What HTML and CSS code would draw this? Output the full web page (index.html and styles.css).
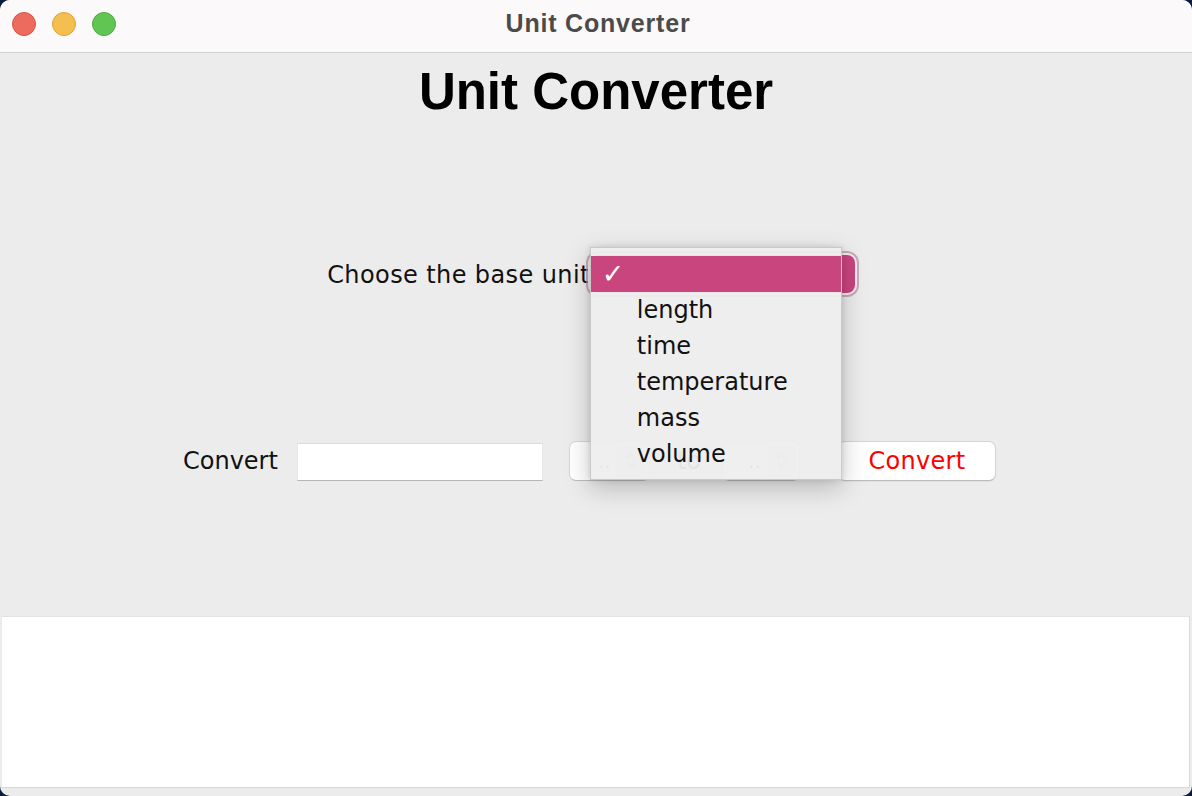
FILE: index.html
```html
<!DOCTYPE html>
<html>
<head>
<meta charset="utf-8">
<link rel="stylesheet" href="styles.css">
</head>
<body>
<div class="window">
  <div class="titlebar">
    <div class="lights">
      <span class="light red"></span>
      <span class="light yellow"></span>
      <span class="light green"></span>
    </div>
    <div class="wintitle">Unit Converter</div>
    <div></div>
  </div>
  <div class="content">
    <h1 class="heading">Unit Converter</h1>
    <div class="base-row">
      <span class="label base-label">Choose the base unit</span>
      <div class="base-combo">
        <div class="popup">
          <div class="item selected"><span class="check">✓</span></div>
          <div class="item">length</div>
          <div class="item">time</div>
          <div class="item">temperature</div>
          <div class="item">mass</div>
          <div class="item">volume</div>
        </div>
      </div>
    </div>
    <div class="convert-row">
      <span class="label">Convert</span>
      <div class="field"></div>
      <div class="combo combo-a"><span class="dots">..</span><span class="arrow"><svg width="14" height="18" viewBox="0 0 14 18"><path d="M3 7 L7 3 L11 7 M3 11 L7 15 L11 11" fill="none" stroke="#e9a9b3" stroke-width="2"/></svg></span></div>
      <span class="label to">to</span>
      <div class="combo combo-b"><span class="dots">..</span><span class="arrow"><svg width="14" height="18" viewBox="0 0 14 18"><path d="M3 7 L7 3 L11 7 M3 11 L7 15 L11 11" fill="none" stroke="#e9a9b3" stroke-width="2"/></svg></span></div>
      <button class="btn">Convert</button>
    </div>
  </div>
  <div class="output"></div>
</div>
</body>
</html>
```

FILE: styles.css
```css
html, body {
  margin: 0;
  padding: 0;
}
body {
  background: #0d1c3c;
  width: 1192px;
  height: 796px;
  overflow: hidden;
}
.window {
  width: 1192px;
  height: 796px;
  border-radius: 10px;
  overflow: hidden;
  background: #ececec;
  display: flex;
  flex-direction: column;
}
.titlebar {
  height: 52px;
  flex: none;
  background: #fbf9fa;
  border-bottom: 1px solid #d2d0d1;
  display: grid;
  grid-template-columns: 1fr auto 1fr;
  align-items: center;
}
.lights {
  display: flex;
  gap: 16px;
  padding-left: 12px;
  margin-top: -5px;
}
.light {
  width: 24px;
  height: 24px;
  border-radius: 50%;
  box-sizing: border-box;
}
.red { background: #ed6a5e; border: 1px solid #d65448; }
.yellow { background: #f5bf4f; border: 1px solid #d9a53c; }
.green { background: #61c554; border: 1px solid #50a845; }
.wintitle {
  font-family: "Liberation Sans", Arial, sans-serif;
  font-weight: bold;
  font-size: 25px;
  letter-spacing: 0.8px;
  color: #4b4b4b;
  margin-top: -6px;
  padding-left: 4px;
}
.content {
  flex: 1;
  display: flex;
  flex-direction: column;
  align-items: center;
}
.heading {
  margin: 9px 0 0 0;
  font-family: "Liberation Sans", Arial, sans-serif;
  font-weight: bold;
  font-size: 51px;
  line-height: 60px;
  color: #000;
}
.label {
  font-family: "DejaVu Sans", sans-serif;
  font-size: 24px;
  color: #111;
}
.base-row {
  margin-top: 132px;
  display: flex;
  align-items: center;
  height: 40px;
  margin-right: 10px;
}
.base-label {
  letter-spacing: 0.4px;
  margin-top: 2px;
}
.base-combo {
  position: relative;
  width: 265px;
  height: 38px;
  border-radius: 8px;
  background: #c9457e;
  box-shadow: 0 0 0 2px #f3eef1, 0 0 0 4px rgba(190, 140, 165, 0.7);
}
.popup {
  position: absolute;
  left: 0;
  top: -8px;
  width: 252px;
  height: 233px;
  box-sizing: border-box;
  padding-top: 8px;
  background: rgba(238, 238, 238, 0.93);
  border: 1px solid #c9c9c9;
  box-shadow: 0 8px 24px rgba(0, 0, 0, 0.22), 0 0 6px rgba(0, 0, 0, 0.12);
  z-index: 5;
}
.item {
  height: 36px;
  line-height: 36px;
  padding-left: 46px;
  font-family: "DejaVu Sans", sans-serif;
  font-size: 24px;
  color: #111;
  position: relative;
}
.item.selected {
  background: #c9457e;
}
.check {
  position: absolute;
  left: 11px;
  top: 0;
  color: #fff;
  font-size: 27px;
  font-weight: bold;
}
.convert-row {
  margin-top: 146px;
  display: flex;
  align-items: center;
  height: 41px;
  margin-right: 13px;
}
.field {
  width: 246px;
  height: 38px;
  box-sizing: border-box;
  background: #fff;
  border-top: 1px solid #dcdcdc;
  border-left: 1px solid #e6e6e6;
  border-right: 1px solid #e6e6e6;
  border-bottom: 1px solid #b5b5b5;
  margin-left: 19px;
  margin-top: 2px;
}
.combo {
  height: 40px;
  box-sizing: border-box;
  background: #fff;
  border: 1px solid #d6d6d6;
  border-bottom-color: #bdbdbd;
  border-radius: 7px;
  display: flex;
  align-items: center;
  justify-content: flex-end;
  gap: 6px;
  padding-right: 4px;
}
.combo-a { width: 81px; margin-left: 26px; }
.combo-b { width: 78px; margin-left: 21px; }
.dots {
  font-family: "DejaVu Sans", sans-serif;
  font-size: 20px;
  color: #666;
}
.arrow {
  width: 28px;
  height: 32px;
  border-radius: 5px;
  background: #fbe6e8;
  display: flex;
  align-items: center;
  justify-content: center;
}
.to {
  margin-left: 27px;
  color: #555;
}
.btn {
  margin-left: 38px;
  width: 158px;
  height: 40px;
  background: #fff;
  border: 1px solid #d4d4d4;
  border-bottom-color: #bcbcbc;
  border-radius: 7px;
  font-family: "DejaVu Sans", sans-serif;
  font-size: 24px;
  letter-spacing: 0.3px;
  color: #ff0000;
  padding: 0;
  box-shadow: 0 1px 1px rgba(0, 0, 0, 0.06);
}
.output {
  flex: none;
  height: 170px;
  margin: 0 2px 8px 2px;
  background: #fff;
  border-top: 1px solid #e2e2e2;
  border-right: 1px solid #dadada;
  border-bottom: 1px solid #d8d8d8;
}
```
